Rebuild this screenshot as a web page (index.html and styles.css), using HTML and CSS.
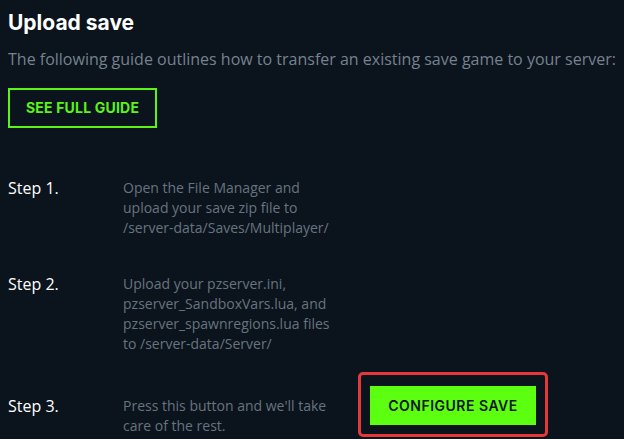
FILE: index.html
```html
<!DOCTYPE html>
<html lang="en">
<head>
  <meta charset="UTF-8">
  <meta name="viewport" content="width=device-width, initial-scale=1.0">
  <title>Upload save</title>
  <link rel="stylesheet" href="styles.css">
</head>
<body>
  <div class="container">
    <h1>Upload save</h1>
    <p class="intro">The following guide outlines how to transfer an existing save game to your server:</p>
    <a class="guide-button" href="#">SEE FULL GUIDE</a>

    <!-- Steps -->
    <div class="steps">
      <div class="step">
        <div class="step-label">Step 1.</div>
        <div class="step-text">Open the File Manager and upload your save zip file to /server-data/Saves/Multiplayer/</div>
      </div>
      <div class="step">
        <div class="step-label">Step 2.</div>
        <div class="step-text">Upload your pzserver.ini, pzserver_SandboxVars.lua, and pzserver_spawnregions.lua files to /server-data/Server/</div>
      </div>
      <div class="step step-action">
        <div class="step-label">Step 3.</div>
        <div class="step-text">Press this button and we'll take care of the rest.</div>
        <div class="highlight">
          <button type="button" class="configure-button">CONFIGURE SAVE</button>
        </div>
      </div>
    </div>
  </div>
</body>
</html>
```

FILE: styles.css
```css
body {
  font-family: "Open Sans", Arial, sans-serif;
  background-color: #0b131d;
  margin: 0;
  padding: 0;
}
.container {
  padding: 8px;
}
h1 {
  font-family: Inter, Arial, sans-serif;
  font-size: 21px;
  font-weight: 700;
  color: #ffffff;
  margin: 0;
  line-height: 30px;
}
.intro {
  color: #76828e;
  font-size: 16px;
  line-height: 24px;
  margin: 9px 0 17px;
}
.guide-button {
  display: inline-block;
  box-sizing: border-box;
  width: 149px;
  height: 40px;
  line-height: 36px;
  border: 2px solid #5cf417;
  color: #5cf417;
  font-family: Inter, Arial, sans-serif;
  font-size: 14px;
  font-weight: 700;
  text-align: center;
  text-decoration: none;
  letter-spacing: 0.2px;
}
.steps {
  display: flex;
  flex-direction: column;
  margin-top: 50px;
}
.step {
  display: flex;
  align-items: flex-start;
}
.step + .step {
  margin-top: 36px;
}
.step-label {
  width: 115px;
  color: #ffffff;
  font-size: 16px;
  line-height: 20px;
}
.step-text {
  width: 218px;
  color: #68737f;
  font-size: 14px;
  line-height: 20px;
}
.step.step-action {
  margin-top: 18px;
}
.step-action .step-label,
.step-action .step-text {
  padding-top: 24px;
}
.highlight {
  margin-left: 17px;
  padding: 11px 9px 9px;
  border: 3px solid #e5383b;
  border-radius: 5px;
}
.configure-button {
  display: block;
  width: 166px;
  height: 39px;
  background-color: #5cff0f;
  color: #10161c;
  border: none;
  font-family: Inter, Arial, sans-serif;
  font-size: 14px;
  font-weight: 600;
  letter-spacing: 0.5px;
  cursor: pointer;
}
```
